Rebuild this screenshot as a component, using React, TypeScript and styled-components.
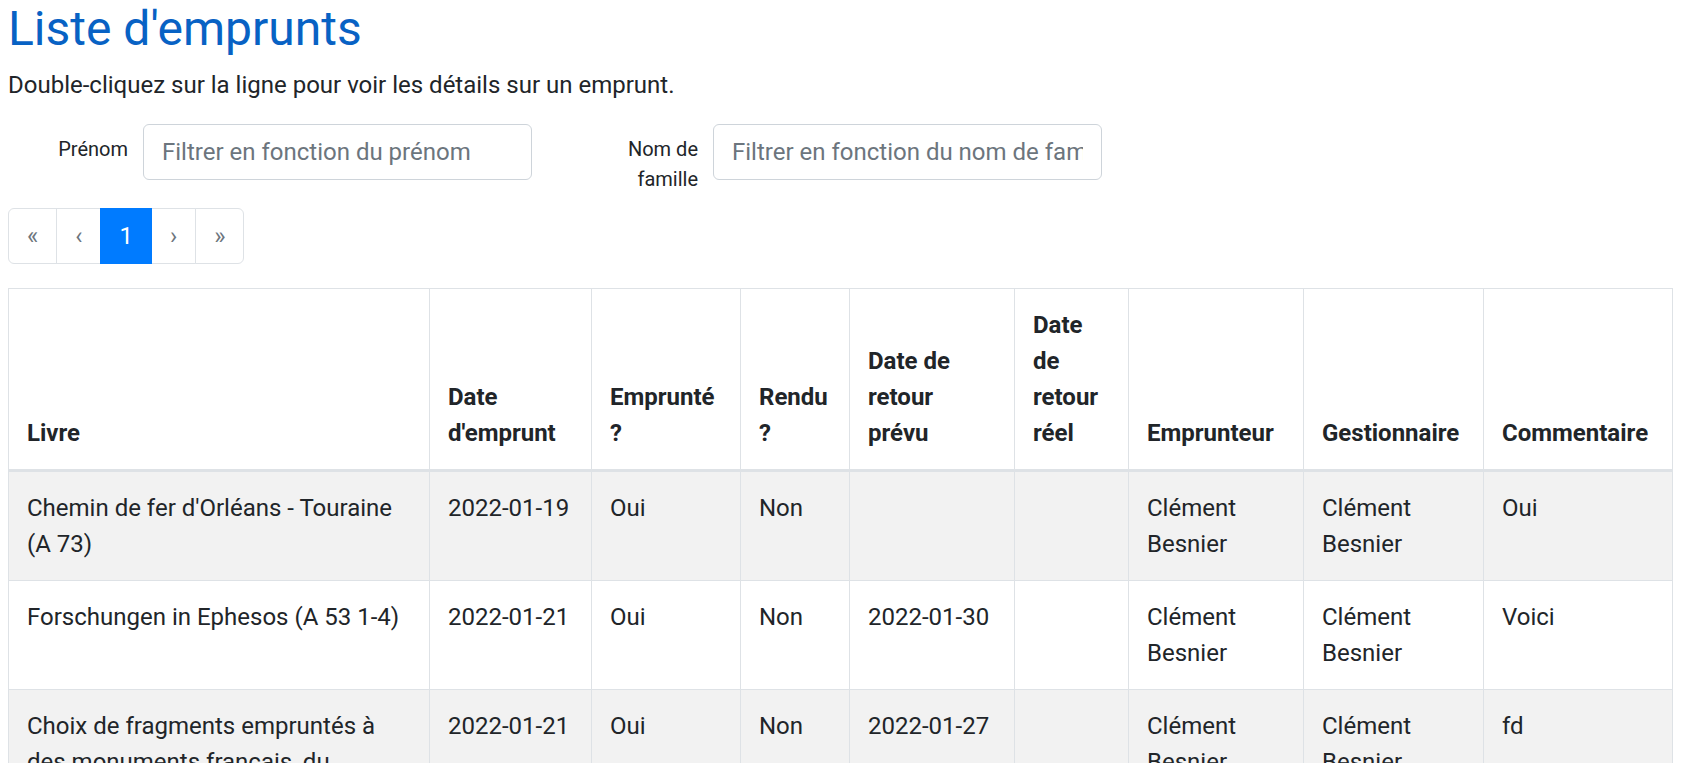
import React from "react";
import styled, { createGlobalStyle } from "styled-components";

const GlobalStyle = createGlobalStyle`
  *, *::before, *::after { box-sizing: border-box; }
  html, body { margin: 0; padding: 0; }
  body {
    font-family: Roboto, "Noto Sans", "Liberation Sans", sans-serif;
    font-size: 24px;
    line-height: 36px;
    color: #212529;
    background: #ffffff;
  }
`;

const Page = styled.div`
  padding: 0 8px;
`;

const Title = styled.h1`
  margin: 0 0 9px 0;
  font-size: 48px;
  line-height: 57.6px;
  font-weight: 400;
  color: #0862c4;
`;

const Intro = styled.p`
  margin: 0 0 21px 0;
  font-size: 24px;
  line-height: 36px;
`;

const FilterRow = styled.div`
  display: flex;
  align-items: flex-start;
  gap: 61px;
  margin-left: 15px;
  height: 84px;
`;

const FilterGroup = styled.div`
  display: flex;
  align-items: flex-start;
`;

const FilterLabel = styled.label`
  width: 120px;
  padding: 10px 15px 0 0;
  text-align: right;
  font-size: 20px;
  line-height: 30px;
  color: #212529;
`;

const FilterInput = styled.input`
  width: 389px;
  height: 56px;
  padding: 9px 18px;
  font-family: inherit;
  font-size: 24px;
  line-height: 36px;
  color: #495057;
  background: #ffffff;
  border: 1px solid #ced4da;
  border-radius: 6px;
  outline: none;
  &::placeholder {
    color: #6c757d;
    opacity: 1;
  }
`;

const Pagination = styled.ul`
  display: flex;
  list-style: none;
  margin: 0 0 24px 0;
  padding: 0;
`;

const PageItem = styled.li`
  display: block;
  & + & { margin-left: -1px; }
  &:first-child > span { border-radius: 6px 0 0 6px; }
  &:last-child > span { border-radius: 0 6px 6px 0; }
`;

const PageLink = styled.span<{ $active?: boolean }>`
  position: relative;
  display: block;
  padding: 12px 18px;
  font-size: 24px;
  line-height: 30px;
  color: ${(p) => (p.$active ? "#ffffff" : "#6c757d")};
  background: ${(p) => (p.$active ? "#007bff" : "#ffffff")};
  border: 1px solid ${(p) => (p.$active ? "#007bff" : "#dee2e6")};
  z-index: ${(p) => (p.$active ? 3 : 1)};
`;

const Table = styled.table`
  width: 1664px;
  border-collapse: collapse;
  table-layout: fixed;
  color: #212529;
`;

const Col = styled.col<{ $w: number }>`
  width: ${(p) => p.$w}px;
`;

const HeadCell = styled.th`
  padding: 18px;
  text-align: left;
  vertical-align: bottom;
  font-weight: 700;
  white-space: nowrap;
  border: 1px solid #dee2e6;
  border-bottom: 3px solid #dee2e6;
`;

const BodyRow = styled.tr<{ $striped: boolean }>`
  background: ${(p) => (p.$striped ? "#f2f2f2" : "#ffffff")};
`;

const Cell = styled.td`
  padding: 18px;
  vertical-align: top;
  border: 1px solid #dee2e6;
`;

const widths = [421, 162, 149, 109, 165, 114, 175, 180, 189];

const headers: React.ReactNode[] = [
  "Livre",
  <>Date<br />d'emprunt</>,
  <>Emprunté<br />?</>,
  <>Rendu<br />?</>,
  <>Date de<br />retour<br />prévu</>,
  <>Date<br />de<br />retour<br />réel</>,
  "Emprunteur",
  "Gestionnaire",
  "Commentaire",
];

const rows: string[][] = [
  [
    "Chemin de fer d'Orléans - Touraine (A 73)",
    "2022-01-19",
    "Oui",
    "Non",
    "",
    "",
    "Clément Besnier",
    "Clément Besnier",
    "Oui",
  ],
  [
    "Forschungen in Ephesos (A 53 1-4)",
    "2022-01-21",
    "Oui",
    "Non",
    "2022-01-30",
    "",
    "Clément Besnier",
    "Clément Besnier",
    "Voici",
  ],
  [
    "Choix de fragments empruntés à des monuments français, du commencement du Moyen Âge (A 12)",
    "2022-01-21",
    "Oui",
    "Non",
    "2022-01-27",
    "",
    "Clément Besnier",
    "Clément Besnier",
    "fd",
  ],
];

const pages = [
  { label: "«", active: false },
  { label: "‹", active: false },
  { label: "1", active: true },
  { label: "›", active: false },
  { label: "»", active: false },
];

export default function App() {
  return (
    <>
      <GlobalStyle />
      <Page>
        <Title>Liste d'emprunts</Title>
        <Intro>Double-cliquez sur la ligne pour voir les détails sur un emprunt.</Intro>
        <FilterRow>
          <FilterGroup>
            <FilterLabel htmlFor="prenom">Prénom</FilterLabel>
            <FilterInput id="prenom" placeholder="Filtrer en fonction du prénom" />
          </FilterGroup>
          <FilterGroup>
            <FilterLabel htmlFor="nom">Nom de famille</FilterLabel>
            <FilterInput id="nom" placeholder="Filtrer en fonction du nom de famille" />
          </FilterGroup>
        </FilterRow>
        <Pagination>
          {pages.map((p, i) => (
            <PageItem key={i}>
              <PageLink $active={p.active}>{p.label}</PageLink>
            </PageItem>
          ))}
        </Pagination>
        <Table>
          <colgroup>
            {widths.map((w, i) => (
              <Col key={i} $w={w} />
            ))}
          </colgroup>
          <thead>
            <tr>
              {headers.map((h, i) => (
                <HeadCell key={i}>{h}</HeadCell>
              ))}
            </tr>
          </thead>
          <tbody>
            {rows.map((r, i) => (
              <BodyRow key={i} $striped={i % 2 === 0}>
                {r.map((c, j) => (
                  <Cell key={j}>{c}</Cell>
                ))}
              </BodyRow>
            ))}
          </tbody>
        </Table>
      </Page>
    </>
  );
}
